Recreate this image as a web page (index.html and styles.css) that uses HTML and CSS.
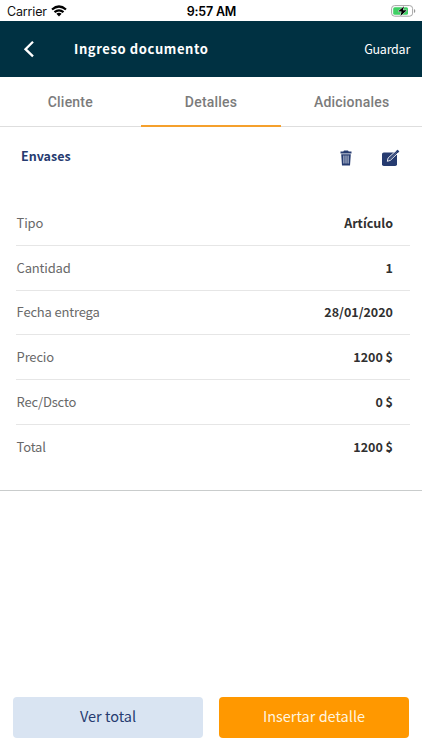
FILE: index.html
```html
<!DOCTYPE html>
<html lang="es">
<head>
<meta charset="utf-8">
<title>Ingreso documento</title>
<link rel="stylesheet" href="styles.css">
</head>
<body>
<div class="status">
  <div class="carrier"><span>Carrier</span>
    <svg width="16" height="12" viewBox="0 0 16 12"><g fill="none" stroke="#000" stroke-width="2.2"><path d="M1 4.5Q8-1.500 15 4.500"/><path d="M3.500 7.200Q8 3.400 12.500 7.200"/></g><path d="M5.400 8.800Q8 6.800 10.600 8.800L8 11.500Z"/></svg>
  </div>
  <span class="time">9:57 AM</span>
  <svg class="battery" width="26" height="12" viewBox="0 0 26 12"><rect x="1.600" y=".6" width="21" height="10.600" rx="3" fill="#fff" stroke="#a5a5a5"/><rect x="3.200" y="2.200" width="14.800" height="7.500" rx="1.500" fill="#3fd064"/><path d="M24 4v4q1.300-.7 1.300-2t-1.300-2z" fill="#999"/><path d="M14 1.200 8 6.600h3.600L10.400 10.900 16.900 5.300h-3.900z" fill="#000" stroke="#fff" stroke-width="1" paint-order="stroke"/></svg>
</div>
<header class="bar">
  <svg class="back" width="12" height="18" viewBox="0 0 12 18"><path d="M11 1.800 3.500 9.200l7.500 7.200" fill="none" stroke="#fff" stroke-width="2.300"/></svg>
  <h1>Ingreso documento</h1>
  <span class="save">Guardar</span>
</header>
<nav class="tabs"><span>Cliente</span><span class="active">Detalles</span><span>Adicionales</span></nav>
<section class="detail">
  <div class="head">
    <h2>Envases</h2>
    <svg class="trash" width="12" height="16" viewBox="0 0 12 16"><path fill="#263b70" d="M4 .5h4l.7 1H11.500v2H.5v-2h2.800zM1.200 4.200h9.600L10 15.500H2z"/><path d="M3.900 5.500v8M6 5.500v8M8.100 5.500v8" stroke="#dfe4ee" stroke-width=".9"/></svg>
    <svg class="edit" width="19" height="18" viewBox="0 0 19 18"><rect x="1" y="3.500" width="15" height="13.500" rx="1.800" fill="#263b70"/><path d="m6.300 12.300.8-3.300L16.200.7l2 2.200-8.900 8.500z" fill="#263b70" stroke="#fff" stroke-width=".9"/><path d="m15.400 1.800 1.300-1.100 1.600 1.700-1.400 1.300z" fill="#263b70"/><path d="m8.300 10.300 7.500-7.200" stroke="#8a96b3" stroke-width=".5"/></svg>
  </div>
  <dl>
    <div><dt>Tipo</dt><dd>Artículo</dd></div>
    <div><dt>Cantidad</dt><dd>1</dd></div>
    <div><dt>Fecha entrega</dt><dd>28/01/2020</dd></div>
    <div><dt>Precio</dt><dd>1200 $</dd></div>
    <div><dt>Rec/Dscto</dt><dd>0 $</dd></div>
    <div><dt>Total</dt><dd>1200 $</dd></div>
  </dl>
</section>
<footer><button class="total">Ver total</button><button class="insert">Insertar detalle</button></footer>
</body>
</html>
```
FILE: styles.css
```css
* { box-sizing: border-box; margin: 0; }
body { height: 750px; display: flex; flex-direction: column; background: #fff; font-family: "Noto Sans CJK SC", sans-serif; overflow: hidden; }
svg { display: block; flex: none; }
.status { height: 21px; display: grid; grid-template-columns: 1fr auto 1fr; align-items: center; padding: 0 6px 0 7px; font: 12.500px/21px Inter, sans-serif; color: #111; }
.carrier { display: flex; gap: 4px; align-items: center; }
.carrier span { letter-spacing: -.15px; padding-top: 1px; }
.time { font-weight: 600; color: #000; letter-spacing: -.2px; padding-top: 1px; }
.battery { justify-self: end; }
.bar { height: 56px; background: #003142; color: #fff; display: flex; align-items: center; padding: 0 12px 0 22px; }
.bar h1 { font-size: 13px; line-height: 20px; font-weight: 700; letter-spacing: .6px; margin-left: 40px; flex: 1; }
.save { font-size: 12.500px; line-height: 20px; letter-spacing: -.25px; }
.tabs { height: 50px; display: grid; grid-template-columns: repeat(3, 1fr); border-bottom: 1px solid #dedede; font: 500 14px/50px Roboto, sans-serif; color: #7b7b7b; text-align: center; letter-spacing: .2px; }
.tabs .active { height: 50px; border-bottom: 2px solid #f5a02c; }
.detail { height: 364px; border-bottom: 1px solid #c9cccc; }
.head { height: 74px; display: flex; padding: 19px 22px 0 21px; }
.head h2 { font-size: 12.500px; line-height: 20px; color: #263b70; flex: 1; }
.trash { margin: 4px 29px 0 0; }
.edit { margin-top: 3px; }
dl { margin: 0 12px 0 16px; }
dl div { height: 44.8px; display: flex; justify-content: space-between; align-items: center; padding: 0 17px 0 .6px; border-bottom: 1px solid #e6e6e6; font-size: 13px; line-height: 20px; }
dl div:last-child { border: 0; }
dt { color: #696969; letter-spacing: -.18px; }
dd { color: #303030; font-size: 12.500px; font-weight: 700; }
footer { margin-top: auto; display: flex; gap: 16px; padding: 0 13px 12px; }
button { flex: 1; height: 41px; border: 0; border-radius: 4px; padding: 0 0 3px; font: 14.500px/20px "Noto Sans CJK SC", sans-serif; }
.total { background: #d9e4f2; color: #263b70; }
.insert { background: #ff9800; color: #fff4df; }
```
